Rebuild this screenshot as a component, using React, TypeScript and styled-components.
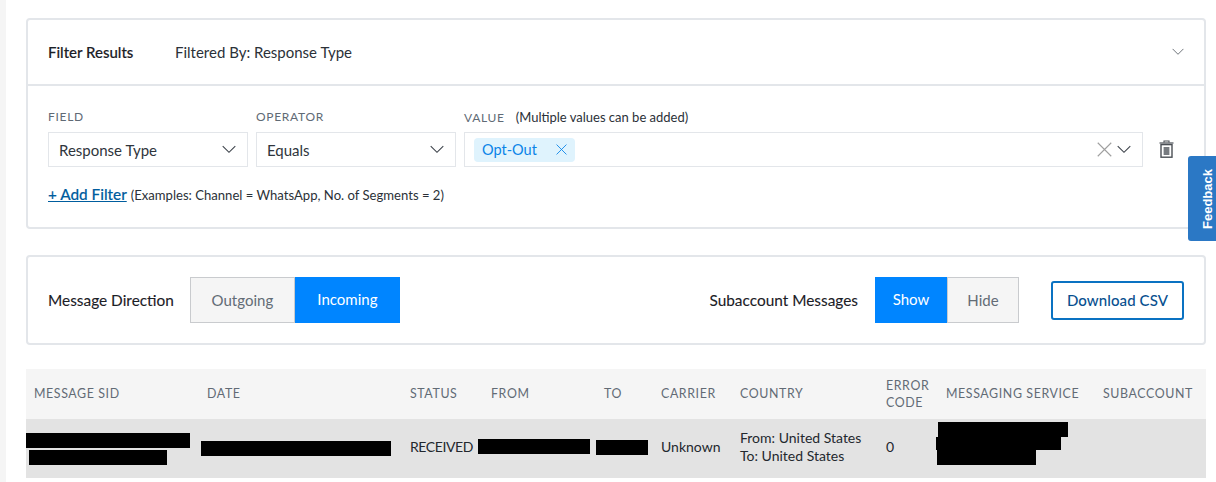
import React from 'react';
import styled, { createGlobalStyle } from 'styled-components';

const GlobalStyle = createGlobalStyle`
  html, body {
    margin: 0;
    padding: 0;
    background: #fff;
    font-family: Lato, "Open Sans", sans-serif;
    color: #23282e;
  }
`;

const Page = styled.div`
  display: flex;
  width: 1216px;
  height: 482px;
  overflow: hidden;
  position: relative;
`;

const Gutter = styled.div`
  width: 6px;
  background: #f5f5f5;
`;

const Content = styled.main`
  width: 1180px;
  margin-left: 20px;
  padding-top: 18px;
`;

const Card = styled.section`
  box-sizing: border-box;
  border: 2px solid #e3e6ea;
  border-radius: 4px;
  background: #fff;
`;

const FilterHeader = styled.div`
  box-sizing: border-box;
  height: 66px;
  display: flex;
  align-items: center;
  padding: 0 20px;
  border-bottom: 2px solid #e3e6ea;
  font-size: 15px;
`;

const FilterTitle = styled.div`
  width: 127px;
  font-weight: 500;
  color: #1b2026;
  -webkit-text-stroke: 0.15px #1b2026;
`;

const FilterSummary = styled.div`
  flex: 1;
  color: #2b3138;
`;

const FilterBody = styled.div`
  box-sizing: border-box;
  height: 141px;
  padding: 22px 20px 0;
`;

const FilterFields = styled.div`
  display: grid;
  grid-template-columns: 200px 200px 679px 24px;
  column-gap: 8px;
`;

const Field = styled.div`
  display: flex;
  flex-direction: column;
`;

const FieldLabel = styled.div`
  box-sizing: border-box;
  height: 24px;
  padding-top: 1px;
  line-height: 16px;
  font-size: 12px;
  letter-spacing: 0.7px;
  color: #606a75;
  white-space: nowrap;
`;

const LabelHint = styled.span`
  margin-left: 11px;
  font-size: 13px;
  letter-spacing: 0;
  color: #2b3138;
`;

const SelectBox = styled.div`
  box-sizing: border-box;
  height: 35px;
  display: flex;
  align-items: center;
  padding: 0 11px 0 10px;
  border: 1px solid #e3e6ea;
  background: #fff;
  font-size: 15px;
  color: #2f353c;
`;

const SelectValue = styled.span`
  flex: 1;
`;

const Chip = styled.span`
  box-sizing: border-box;
  height: 24px;
  display: inline-flex;
  align-items: center;
  gap: 19px;
  margin-left: -1px;
  padding: 0 8px;
  border-radius: 4px;
  background: #dff3fd;
  color: #0a84e8;
  font-size: 14.5px;
`;

const ChipSpacer = styled.span`
  flex: 1;
`;

const ClearButton = styled.span`
  display: flex;
  margin-right: 5px;
`;

const TrashButton = styled.div`
  display: flex;
  align-items: center;
  justify-content: center;
  padding: 22px 0 0 7px;
`;

const FilterFooter = styled.div`
  display: flex;
  align-items: baseline;
  gap: 4px;
  margin-top: 18px;
`;

const AddFilter = styled.a`
  font-size: 15.3px;
  font-weight: 500;
  color: #005d9e;
  text-decoration: underline;
  -webkit-text-stroke: 0.15px #005d9e;
`;

const FooterHint = styled.span`
  font-size: 13.1px;
  color: #2b3138;
`;

const DirectionCard = styled(Card)`
  height: 90px;
  margin-top: 26px;
  display: flex;
  align-items: center;
  padding: 0 20px;
`;

const ControlLabel = styled.span`
  font-size: 15.4px;
  color: #1b2026;
  -webkit-text-stroke: 0.1px #1b2026;
`;

const Toggle = styled.div<{ $gap: number }>`
  display: flex;
  height: 46px;
  margin-left: ${(p) => p.$gap}px;
`;

const ToggleOption = styled.div<{ $active?: boolean; $width: number }>`
  box-sizing: border-box;
  width: ${(p) => p.$width}px;
  display: flex;
  align-items: center;
  justify-content: center;
  font-size: 15px;
  padding-bottom: ${(p) => (p.$active ? 2 : 0)}px;
  background: ${(p) => (p.$active ? '#0085ff' : '#f5f5f5')};
  color: ${(p) => (p.$active ? '#fff' : '#636c76')};
  border: ${(p) => (p.$active ? 'none' : '1px solid #c9cbce')};
`;

const Spacer = styled.div`
  flex: 1;
`;

const DownloadButton = styled.button`
  box-sizing: border-box;
  width: 133px;
  height: 39px;
  margin-left: 32px;
  padding: 0;
  border: 2px solid #0a72c2;
  border-radius: 3px;
  background: #fff;
  color: #08508f;
  font-family: inherit;
  font-size: 15px;
  font-weight: 500;
  letter-spacing: 0.1px;
`;

const columns = '173px 203px 81px 113px 57px 79px 146px 60px 157px 111px';

const HeaderRow = styled.div`
  display: grid;
  grid-template-columns: ${columns};
  height: 50px;
  margin-top: 24px;
  background: #f5f5f5;
`;

const HeaderCell = styled.div`
  display: flex;
  align-items: center;
  padding: 0 0 1px 8px;
  font-size: 12.4px;
  line-height: 17px;
  letter-spacing: 0.6px;
  color: #626b75;
`;

const DataRow = styled.div`
  display: grid;
  grid-template-columns: ${columns};
  height: 59px;
  background: #e3e3e3;
`;

const DataCell = styled.div`
  display: flex;
  flex-direction: column;
  justify-content: center;
  padding: 0 0 4px 8px;
  font-size: 14px;
  line-height: 18px;
  color: #23282e;
  white-space: nowrap;
`;

const StatusCell = styled(DataCell)`
  letter-spacing: -0.4px;
`;

const RedactedCell = styled.div<{ $lift?: number; $gap?: number }>`
  display: flex;
  flex-direction: column;
  justify-content: center;
  gap: ${(p) => p.$gap ?? 0}px;
  padding-bottom: ${(p) => p.$lift ?? 0}px;
`;

const Redaction = styled.div<{ $width: number; $offset?: number; $height?: number }>`
  width: ${(p) => p.$width}px;
  height: ${(p) => p.$height ?? 15}px;
  margin-left: ${(p) => p.$offset ?? 0}px;
  background: #000;
`;

const FeedbackTab = styled.div`
  position: absolute;
  top: 156px;
  right: 0;
  box-sizing: border-box;
  width: 28px;
  height: 85px;
  display: flex;
  align-items: center;
  justify-content: flex-end;
  padding-right: 1px;
  border-radius: 3px 0 0 3px;
  background: #2b78c5;
  color: #fff;
  font-family: "Liberation Sans", Arial, sans-serif;
  font-size: 13px;
  font-weight: 700;
`;

const FeedbackLabel = styled.span`
  writing-mode: vertical-rl;
  transform: rotate(180deg);
`;

const Chevron = ({ size = 14, color = '#3a4048' }: { size?: number; color?: string }) => (
  <svg width={size} height={size * 0.6} viewBox="0 0 20 12" fill="none">
    <path d="M1 1.5 10 10.5 19 1.5" stroke={color} strokeWidth="1.5" />
  </svg>
);

const Cross = ({ size, color, weight }: { size: number; color: string; weight: number }) => (
  <svg width={size} height={size} viewBox="0 0 20 20" fill="none">
    <path d="M1 1 19 19M19 1 1 19" stroke={color} strokeWidth={weight} />
  </svg>
);

const TrashIcon = () => (
  <svg width="15" height="18" viewBox="0 0 15 18" fill="none">
    <path d="M0.5 3H14.5" stroke="#4a4f55" strokeWidth="1.2" />
    <path d="M5 2.6V1H10V2.6" stroke="#4a4f55" strokeWidth="1.1" />
    <rect x="2" y="4.6" width="11" height="12.6" stroke="#4a4f55" strokeWidth="1.4" />
    <rect x="4.6" y="7" width="5.8" height="8" fill="#777b80" />
  </svg>
);

const App: React.FC = () => {
  return (
    <>
      <GlobalStyle />
      <Page>
        <Gutter />
        <Content>
          <Card>
            <FilterHeader>
              <FilterTitle>Filter Results</FilterTitle>
              <FilterSummary>Filtered By: Response Type</FilterSummary>
              <Chevron size={12} color="#5f656c" />
            </FilterHeader>
            <FilterBody>
              <FilterFields>
                <Field>
                  <FieldLabel>FIELD</FieldLabel>
                  <SelectBox>
                    <SelectValue>Response Type</SelectValue>
                    <Chevron />
                  </SelectBox>
                </Field>
                <Field>
                  <FieldLabel>OPERATOR</FieldLabel>
                  <SelectBox>
                    <SelectValue>Equals</SelectValue>
                    <Chevron />
                  </SelectBox>
                </Field>
                <Field>
                  <FieldLabel>
                    VALUE
                    <LabelHint>(Multiple values can be added)</LabelHint>
                  </FieldLabel>
                  <SelectBox>
                    <Chip>
                      Opt-Out
                      <Cross size={11} color="#0a84e8" weight={1.6} />
                    </Chip>
                    <ChipSpacer />
                    <ClearButton>
                      <Cross size={15} color="#a0a0a0" weight={1.5} />
                    </ClearButton>
                    <Chevron />
                  </SelectBox>
                </Field>
                <TrashButton>
                  <TrashIcon />
                </TrashButton>
              </FilterFields>
              <FilterFooter>
                <AddFilter>+ Add Filter</AddFilter>
                <FooterHint>(Examples: Channel = WhatsApp, No. of Segments = 2)</FooterHint>
              </FilterFooter>
            </FilterBody>
          </Card>

          <DirectionCard>
            <ControlLabel>Message Direction</ControlLabel>
            <Toggle $gap={16}>
              <ToggleOption $width={105}>Outgoing</ToggleOption>
              <ToggleOption $width={105} $active>Incoming</ToggleOption>
            </Toggle>
            <Spacer />
            <ControlLabel>Subaccount Messages</ControlLabel>
            <Toggle $gap={17}>
              <ToggleOption $width={72} $active>Show</ToggleOption>
              <ToggleOption $width={72}>Hide</ToggleOption>
            </Toggle>
            <DownloadButton>Download CSV</DownloadButton>
          </DirectionCard>

          <HeaderRow>
            <HeaderCell>MESSAGE SID</HeaderCell>
            <HeaderCell>DATE</HeaderCell>
            <HeaderCell>STATUS</HeaderCell>
            <HeaderCell>FROM</HeaderCell>
            <HeaderCell>TO</HeaderCell>
            <HeaderCell>CARRIER</HeaderCell>
            <HeaderCell>COUNTRY</HeaderCell>
            <HeaderCell>ERROR CODE</HeaderCell>
            <HeaderCell>MESSAGING SERVICE</HeaderCell>
            <HeaderCell>SUBACCOUNT</HeaderCell>
          </HeaderRow>
          <DataRow>
            <RedactedCell $gap={2}>
              <Redaction $width={164} />
              <Redaction $width={138} $offset={3} />
            </RedactedCell>
            <RedactedCell>
              <Redaction $width={190} $offset={2} />
            </RedactedCell>
            <StatusCell>RECEIVED</StatusCell>
            <RedactedCell $lift={4}>
              <Redaction $width={112} $offset={-5} />
            </RedactedCell>
            <RedactedCell $lift={3}>
              <Redaction $width={52} />
            </RedactedCell>
            <DataCell>Unknown</DataCell>
            <DataCell>
              <span>From: United States</span>
              <span>To: United States</span>
            </DataCell>
            <DataCell>0</DataCell>
            <RedactedCell $lift={10}>
              <Redaction $width={130} />
              <Redaction $width={125} $offset={-2} $height={13} />
              <Redaction $width={99} $offset={-1} />
            </RedactedCell>
            <DataCell />
          </DataRow>
        </Content>
        <FeedbackTab>
          <FeedbackLabel>Feedback</FeedbackLabel>
        </FeedbackTab>
      </Page>
    </>
  );
};

export default App;
